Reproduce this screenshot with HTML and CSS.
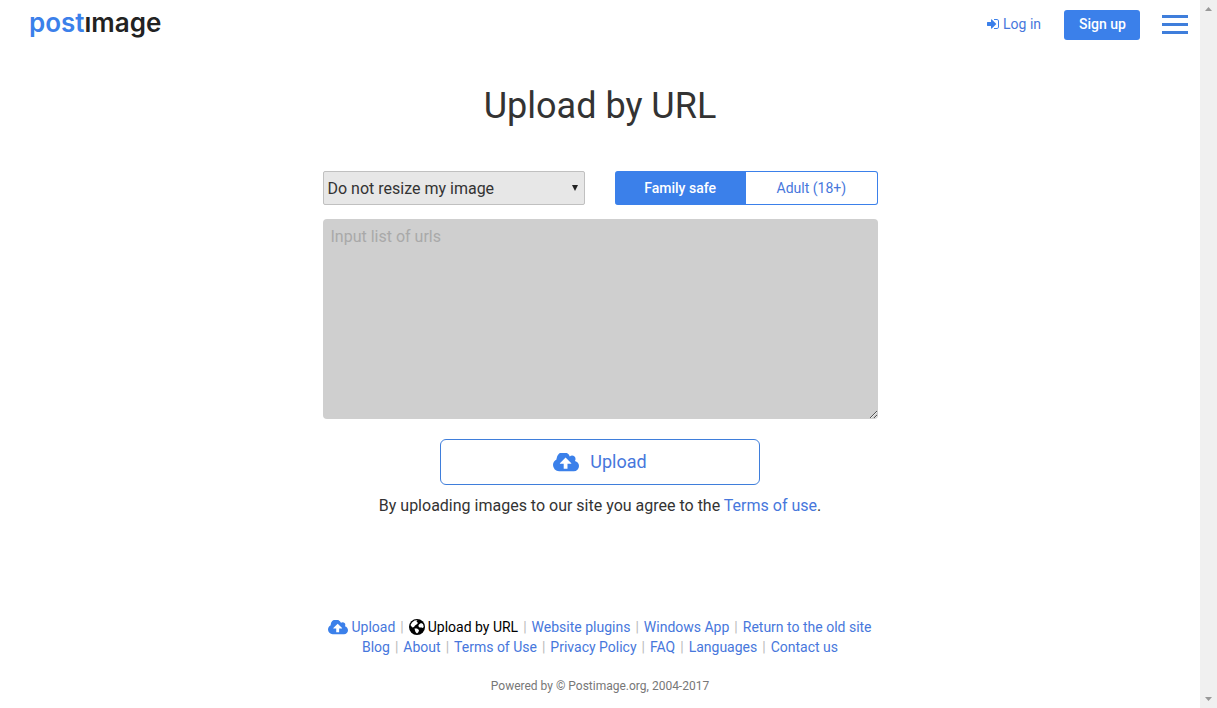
FILE: index.html
```html
<!DOCTYPE html>
<html lang="en">
<head>
<meta charset="utf-8">
<meta name="viewport" content="width=device-width, initial-scale=1">
<title>Postimage.org - Upload by URL</title>
<link rel="stylesheet" href="styles.css">
</head>
<body>
<svg class="sprite" aria-hidden="true">
  <symbol id="cloud" viewBox="0 192 1920 1280">
    <path fill="currentColor" d="M1920 1088q0 159-112.500 271.500t-271.500 112.500h-1088q-185 0-316.500-131.500t-131.500-316.500q0-130 70-240t188-165q-2-30-2-43 0-212 150-362t362-150q156 0 285.500 87t188.500 231q71-62 166-62 106 0 181 75t75 181q0 76-41 138 130 31 213.500 135.500t83.500 238.500z"/>
    <path fill="#fff" d="M930 470L1350 880V920H1070V1290H790V920H510V880Z"/>
  </symbol>
</svg>
<div class="window">
  <div class="page">
    <header class="topbar">
      <a class="logo" href="#" aria-label="postimage"><span class="logo-post">post</span>ımage</a>
      <nav class="account">
        <a class="login" href="#"><svg class="icon-login" viewBox="0 256 1536 1280" aria-hidden="true"><path fill="currentColor" d="M1184 896q0 26-19 45l-544 544q-19 19-45 19t-45-19-19-45v-288h-448q-26 0-45-19t-19-45v-384q0-26 19-45t45-19h448v-288q0-26 19-45t45-19 45 19l544 544q19 19 19 45zm352-352v704q0 119-84.500 203.500t-203.500 84.500h-320q-13 0-22.500-9.500t-9.500-22.500q0-4-1-20t-.5-26.500 3-23.500 10-19.500 20.500-6.500h320q66 0 113-47t47-113v-704q0-66-47-113t-113-47h-312l-11.500-1-11.500-3-8-5.500-7-9-2-13.500q0-4-1-20t-.5-26.500 3-23.500 10-19.500 20.500-6.500h320q119 0 203.500 84.500t84.500 203.500z"/></svg>Log in</a>
        <a class="signup" href="#">Sign up</a>
        <button class="menu" type="button" aria-label="Menu"><span></span><span></span><span></span></button>
      </nav>
    </header>
    <main class="content">
      <h1>Upload by URL</h1>
      <form class="upload">
        <div class="options">
          <div class="select-wrap">
            <select aria-label="Image size"><option>Do not resize my image</option></select>
            <svg class="arrow" viewBox="0 0 6 6" aria-hidden="true"><path d="M0 0H6L3 6Z"/></svg>
          </div>
          <div class="rating">
            <button class="active" type="button">Family safe</button>
            <button type="button">Adult (18+)</button>
          </div>
        </div>
        <textarea placeholder="Input list of urls" aria-label="Input list of urls"></textarea>
        <button class="submit" type="submit"><svg class="icon-submit" aria-hidden="true"><use href="#cloud"/></svg>Upload</button>
      </form>
      <p class="terms">By uploading images to our site you agree to the <a href="#">Terms of use</a>.</p>
    </main>
    <footer class="footer">
      <ul class="links">
        <li><a href="#"><svg class="icon-cloud" aria-hidden="true"><use href="#cloud"/></svg>Upload</a></li>
        <li><a class="current" href="#"><svg class="icon-globe" viewBox="0 0 16 16" aria-hidden="true"><circle cx="8" cy="8" r="8"/><path fill="#fff" d="M1.500 6L3 3.500L5.500 1.500L8.500 1.200L7.500 2.500L9 4L7.500 5.500L6 6.500L5 8L3.500 8.500L2.500 7.500ZM10 5.500L12 4L14 5L14.700 7.500L14 9L12.500 8.500L10.500 8.500L9.300 7ZM5.500 9.500L8 9.500L10 11L9.500 13L8 14.500L6.500 13L6 11.500Z"/></svg>Upload by URL</a></li>
        <li><a href="#">Website plugins</a></li>
        <li><a href="#">Windows App</a></li>
        <li><a href="#">Return to the old site</a></li>
      </ul>
      <ul class="links">
        <li><a href="#">Blog</a></li>
        <li><a href="#">About</a></li>
        <li><a href="#">Terms of Use</a></li>
        <li><a href="#">Privacy Policy</a></li>
        <li><a href="#">FAQ</a></li>
        <li><a href="#">Languages</a></li>
        <li><a href="#">Contact us</a></li>
      </ul>
      <p class="copyright">Powered by © Postimage.org, 2004-2017</p>
    </footer>
  </div>
  <div class="scrollbar" aria-hidden="true">
    <svg viewBox="0 0 7 4"><path d="M0 4L3.500 0L7 4Z"/></svg>
    <svg viewBox="0 0 7 4"><path d="M0 0H7L3.500 4Z"/></svg>
  </div>
</div>
</body>
</html>
```
FILE: styles.css
```css
* { box-sizing: border-box; }
body {
  margin: 0;
  background: #fff;
  color: #333;
  font: 16px/20px Roboto, "Liberation Sans", sans-serif;
}
a { color: #4777dc; text-decoration: none; }
button, select, textarea { font: inherit; color: inherit; margin: 0; }
button { cursor: pointer; }
.sprite { display: none; }
.window { display: flex; min-height: 100vh; }
.page { flex: 1; display: flex; flex-direction: column; min-width: 0; }
.scrollbar {
  width: 17px;
  padding: 7px 5px;
  background: #f0f0f0;
  display: flex;
  flex-direction: column;
  justify-content: space-between;
}
.scrollbar svg { width: 7px; height: 4px; fill: #999; }

.topbar {
  display: flex;
  justify-content: space-between;
  align-items: flex-start;
  padding: 10px 12px 8px 29px;
}
.logo {
  font: 600 26px/26px Inter, sans-serif;
  color: #222;
}
.logo-post { color: #3b80ea; }
.account { display: flex; align-items: center; font-size: 14px; }
.login { display: flex; align-items: center; gap: 4px; margin-right: 23px; padding-bottom: 2px; }
.icon-login { width: 12px; height: 10px; color: #3b80ea; }
.signup {
  padding: 4px 14px 6px 15px;
  margin-right: 22px;
  border-radius: 3px;
  background: #3b80ea;
  color: #fff;
  font-weight: 500;
}
.menu {
  display: flex;
  flex-direction: column;
  gap: 5px;
  width: 26px;
  padding: 0 0 2px;
  border: 0;
  background: none;
}
.menu span { height: 3px; background: #3f7edb; }

.content { display: flex; flex-direction: column; align-items: center; }
h1 { margin: 38px 0 45px; font-size: 36px; line-height: 40px; font-weight: 400; }
.upload { display: flex; flex-direction: column; align-items: center; width: 100%; max-width: 555px; }
.options { display: grid; grid-template-columns: 1fr 1fr; gap: 30px; width: 100%; align-items: center; }
.select-wrap { display: grid; align-items: center; }
.select-wrap > * { grid-area: 1 / 1; }
.select-wrap select {
  appearance: none;
  width: 100%;
  height: 34px;
  padding: 2px 4px 0;
  border: 1px solid #c0c0c0;
  border-radius: 2px;
  background: #e7e7e7;
}
.arrow { width: 6px; height: 6px; justify-self: end; margin-right: 7px; fill: #222; pointer-events: none; }
.rating { display: grid; grid-template-columns: 1fr 1fr; font-size: 14px; }
.rating button {
  height: 34px;
  padding: 0;
  border: 1px solid #3b80ea;
  border-left: 0;
  border-radius: 0 3px 3px 0;
  background: #fff;
  color: #4777dc;
}
.rating .active { background: #3b80ea; color: #fff; font-weight: 500; border-radius: 3px 0 0 3px; }
textarea {
  display: block;
  width: 100%;
  height: 200px;
  margin: 14px 0 20px;
  padding: 8px;
  border: 0;
  border-radius: 4px;
  background: #cfcfcf;
}
textarea::placeholder { color: #a9a9a9; }
.submit {
  display: flex;
  justify-content: center;
  align-items: center;
  gap: 11px;
  width: 320px;
  max-width: 100%;
  height: 46px;
  border: 1px solid #3f7edb;
  border-radius: 6px;
  background: #fff;
  color: #4777dc;
  font-size: 18px;
}
.icon-submit { width: 26px; height: 19px; color: #3b80ea; }
.terms { margin: 11px 0 0; }

.footer { margin-top: auto; padding-bottom: 12px; text-align: center; font-size: 14px; }
.links {
  display: flex;
  flex-wrap: wrap;
  justify-content: center;
  margin: 0;
  padding: 0;
  list-style: none;
}
.links li { display: flex; }
.links li + li::before { content: "|"; margin: 0 5px; color: #bbb; }
.links a { display: flex; align-items: center; gap: 3px; }
.links .current { color: #000; }
.icon-cloud { width: 20px; height: 15px; color: #3b80ea; }
.icon-globe { width: 16px; height: 16px; }
.copyright { margin: 19px 0 0; font-size: 12px; color: #777; }
```
